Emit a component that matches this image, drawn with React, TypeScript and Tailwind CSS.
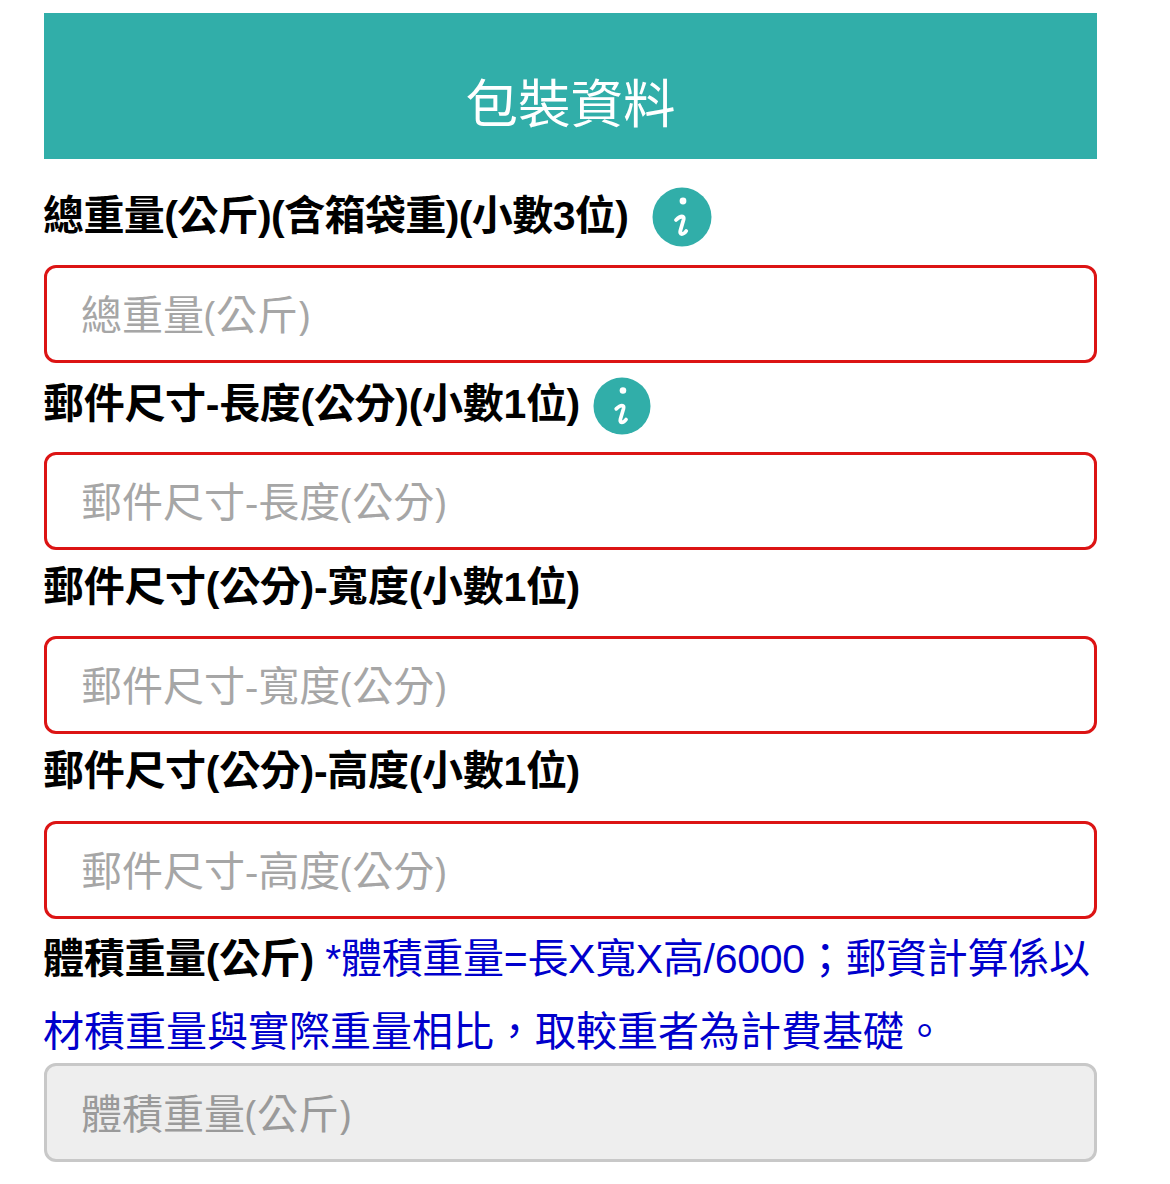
const FONT = "font-['Liberation_Sans','Noto_Sans_CJK_TC',sans-serif]";
const LABEL = "text-[41px] font-bold leading-[56px] tracking-[-0.3px]";

function InfoIcon({ className }: { className?: string }) {
  return (
    <svg viewBox="0 0 60 60" className={className} aria-hidden="true">
      <circle cx="30" cy="30" r="29.5" fill="#31aea9" />
      <circle cx="31" cy="14" r="3.4" fill="#fff" />
      <path
        d="M24 33c2-2 4-3.5 6-3.5 1.6 0 2 1.2 1.6 3l-3.2 11c-.5 2-.2 3.5 1.4 3.5 1.6 0 3-1 4.4-3"
        fill="none"
        stroke="#fff"
        strokeWidth="3.8"
        strokeLinecap="round"
        strokeLinejoin="round"
      />
    </svg>
  );
}

function Field({ placeholder, disabled }: { placeholder: string; disabled?: boolean }) {
  return (
    <input
      type="text"
      disabled={disabled}
      placeholder={placeholder}
      className={
        disabled
          ? "block w-full h-[99px] rounded-[12px] border-[3px] border-[#c8c8c8] bg-[#eeeeee] pl-[34px] pr-4 font-['Open_Sans','Noto_Sans_CJK_TC',sans-serif] text-[41px] outline-none placeholder:text-[#9a9a9a] placeholder:opacity-100"
          : "block w-full h-[98px] rounded-[12px] border-[3px] border-[#dc1414] bg-white pl-[34px] pr-4 font-['Open_Sans','Noto_Sans_CJK_TC',sans-serif] text-[41px] outline-none placeholder:text-[#a6a6a6] placeholder:opacity-100"
      }
    />
  );
}

export default function App() {
  return (
    <div className={`${FONT} min-h-[1184px] w-[1170px] bg-white pl-[44px] pr-[73px] pt-[13px] text-black`}>
      <header className="flex h-[146px] items-center justify-center bg-[#31aea9] pt-[38px] text-[52.5px] leading-none text-white">
        包裝資料
      </header>

      <div className="flex h-[106px] items-start pt-[29px]">
        <span className="-ml-[1px] text-[41px] font-bold leading-[56px] tracking-[-0.6px]">總重量(公斤)(含箱袋重)(小數3位)</span>
        <InfoIcon className="ml-[24px] mt-[-1px] h-[60px] w-[60px] shrink-0" />
      </div>
      <Field placeholder="總重量(公斤)" />

      <div className="flex h-[89px] items-start pt-[13px]">
        <span className={`-ml-[1px] ${LABEL}`}>郵件尺寸-長度(公分)(小數1位)</span>
        <InfoIcon className="ml-[13px] mt-[1px] h-[58px] w-[58px] shrink-0" />
      </div>
      <Field placeholder="郵件尺寸-長度(公分)" />

      <div className="flex h-[86px] items-start pt-[9px]">
        <span className={`-ml-[1px] ${LABEL}`}>郵件尺寸(公分)-寬度(小數1位)</span>
      </div>
      <Field placeholder="郵件尺寸-寬度(公分)" />

      <div className="flex h-[87px] items-start pt-[9px]">
        <span className={`-ml-[1px] ${LABEL}`}>郵件尺寸(公分)-高度(小數1位)</span>
      </div>
      <Field placeholder="郵件尺寸-高度(公分)" />

      <p className="h-[144px] -ml-[1px] pt-[4px] text-[41px] leading-[73px] text-[#0000cc]">
        <span className="font-bold tracking-[-0.3px] text-black">體積重量(公斤)</span>{" "}
        <span className="tracking-[-0.3px]">*體積重量=長X寬X高/6000；郵資計算係以</span>
        材積重量與實際重量相比，取較重者為計費基礎。
      </p>
      <Field placeholder="體積重量(公斤)" disabled />
    </div>
  );
}
